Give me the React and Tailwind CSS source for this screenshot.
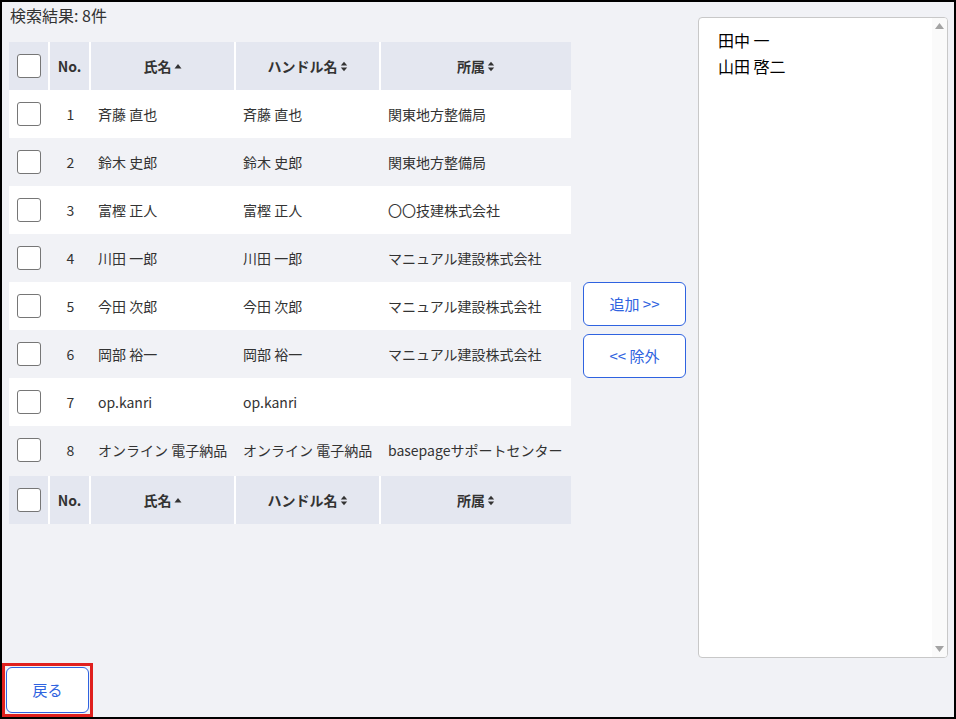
import React from "react";

const rows = [
  { no: 1, name: "斉藤 直也", handle: "斉藤 直也", org: "関東地方整備局" },
  { no: 2, name: "鈴木 史郎", handle: "鈴木 史郎", org: "関東地方整備局" },
  { no: 3, name: "富樫 正人", handle: "富樫 正人", org: "〇〇技建株式会社" },
  { no: 4, name: "川田 一郎", handle: "川田 一郎", org: "マニュアル建設株式会社" },
  { no: 5, name: "今田 次郎", handle: "今田 次郎", org: "マニュアル建設株式会社" },
  { no: 6, name: "岡部 裕一", handle: "岡部 裕一", org: "マニュアル建設株式会社" },
  { no: 7, name: "op.kanri", handle: "op.kanri", org: "" },
  { no: 8, name: "オンライン 電子納品", handle: "オンライン 電子納品", org: "basepageサポートセンター" },
];

const cols = "grid grid-cols-[41px_41px_145px_145px_190px]";

const SortUp = () => (
  <svg width="8" height="10" viewBox="0 0 8 10" className="ml-[2px]">
    <path d="M0.5 7.5 L4 3 L7.5 7.5 Z" fill="#333" />
  </svg>
);

const SortBoth = () => (
  <svg width="8" height="11" viewBox="0 0 8 11" className="ml-[2px]">
    <path d="M0.8 4.6 L4 0.8 L7.2 4.6 Z" fill="#333" />
    <path d="M0.8 6.4 L4 10.2 L7.2 6.4 Z" fill="#333" />
  </svg>
);

const Check = () => <div className="w-6 h-6 rounded-[3px] border border-[#767676] bg-white" />;

const HeaderRow = () => (
  <div className={`${cols} h-[48px] bg-[#e4e7f0] text-[14px] font-bold text-[#333]`}>
    <div className="flex items-center pl-2 border-r-2 border-white"><Check /></div>
    <div className="flex items-center justify-center border-r-2 border-white">No.</div>
    <div className="flex items-center justify-center border-r-2 border-white">氏名<SortUp /></div>
    <div className="flex items-center justify-center border-r-2 border-white">ハンドル名<SortBoth /></div>
    <div className="flex items-center justify-center">所属<SortBoth /></div>
  </div>
);

export default function App() {
  return (
    <div
      className="w-[956px] h-[719px] border-2 border-black bg-[#f1f2f6] flex flex-col text-[#333]"
      style={{ fontFamily: '"Noto Sans CJK JP", "Noto Sans", sans-serif' }}
    >
      <div className="flex-1 flex min-h-0">
        {/* left: results */}
        <div className="pl-[7px] w-[569px]">
          <div className="h-[26px] leading-[26px] pl-[1px] text-[16px] text-[#333]">検索結果: 8件</div>
          <div className="mt-[14px] w-[562px]">
            <HeaderRow />
            {rows.map((r, i) => (
              <div
                key={r.no}
                className={`${cols} h-[48px] text-[14px] ${i % 2 === 0 ? "bg-white" : "bg-[#f1f2f6]"}`}
              >
                <div className="flex items-center pl-2"><Check /></div>
                <div className="flex items-center justify-center">{r.no}</div>
                <div className="flex items-center pl-[7px] whitespace-nowrap">{r.name}</div>
                <div className="flex items-center pl-[7px] whitespace-nowrap">{r.handle}</div>
                <div className="flex items-center pl-[7px] whitespace-nowrap">{r.org}</div>
              </div>
            ))}
            <div className="mt-[2px]"><HeaderRow /></div>
          </div>
        </div>

        {/* middle: buttons */}
        <div className="ml-[12px] pt-[280px] flex flex-col gap-2">
          <button className="w-[103px] h-[44px] rounded-md border border-[#2f63e0] bg-white text-[15px] text-[#2f63e0]">
            追加 &gt;&gt;
          </button>
          <button className="w-[103px] h-[44px] rounded-md border border-[#2f63e0] bg-white text-[15px] text-[#2f63e0]">
            &lt;&lt; 除外
          </button>
        </div>

        {/* right: selected list */}
        <div className="ml-[12px] mt-[15px] w-[250px] h-[641px] rounded-[4px] border border-[#c8c8c8] bg-white flex overflow-hidden">
          <div className="flex-1 pl-[19px] pt-[9px] text-[16px] text-black leading-[26px]">
            <div>田中 一</div>
            <div>山田 啓二</div>
          </div>
          <div className="w-[15px] bg-[#fafafa] flex flex-col justify-between items-center py-[5px]">
            <svg width="9" height="6" viewBox="0 0 9 6"><path d="M0 6 L4.5 0 L9 6 Z" fill="#a3a3a3" /></svg>
            <svg width="9" height="6" viewBox="0 0 9 6"><path d="M0 0 L4.5 6 L9 0 Z" fill="#a3a3a3" /></svg>
          </div>
        </div>
      </div>

      {/* bottom */}
      <div className="h-[54px] flex items-end">
        <div className="border-[3px] border-[#e0201e] p-[1px]">
          <button className="w-[83px] h-[46px] rounded-md border border-[#2f63e0] bg-white text-[15px] text-[#2f63e0]">
            戻る
          </button>
        </div>
      </div>
    </div>
  );
}
